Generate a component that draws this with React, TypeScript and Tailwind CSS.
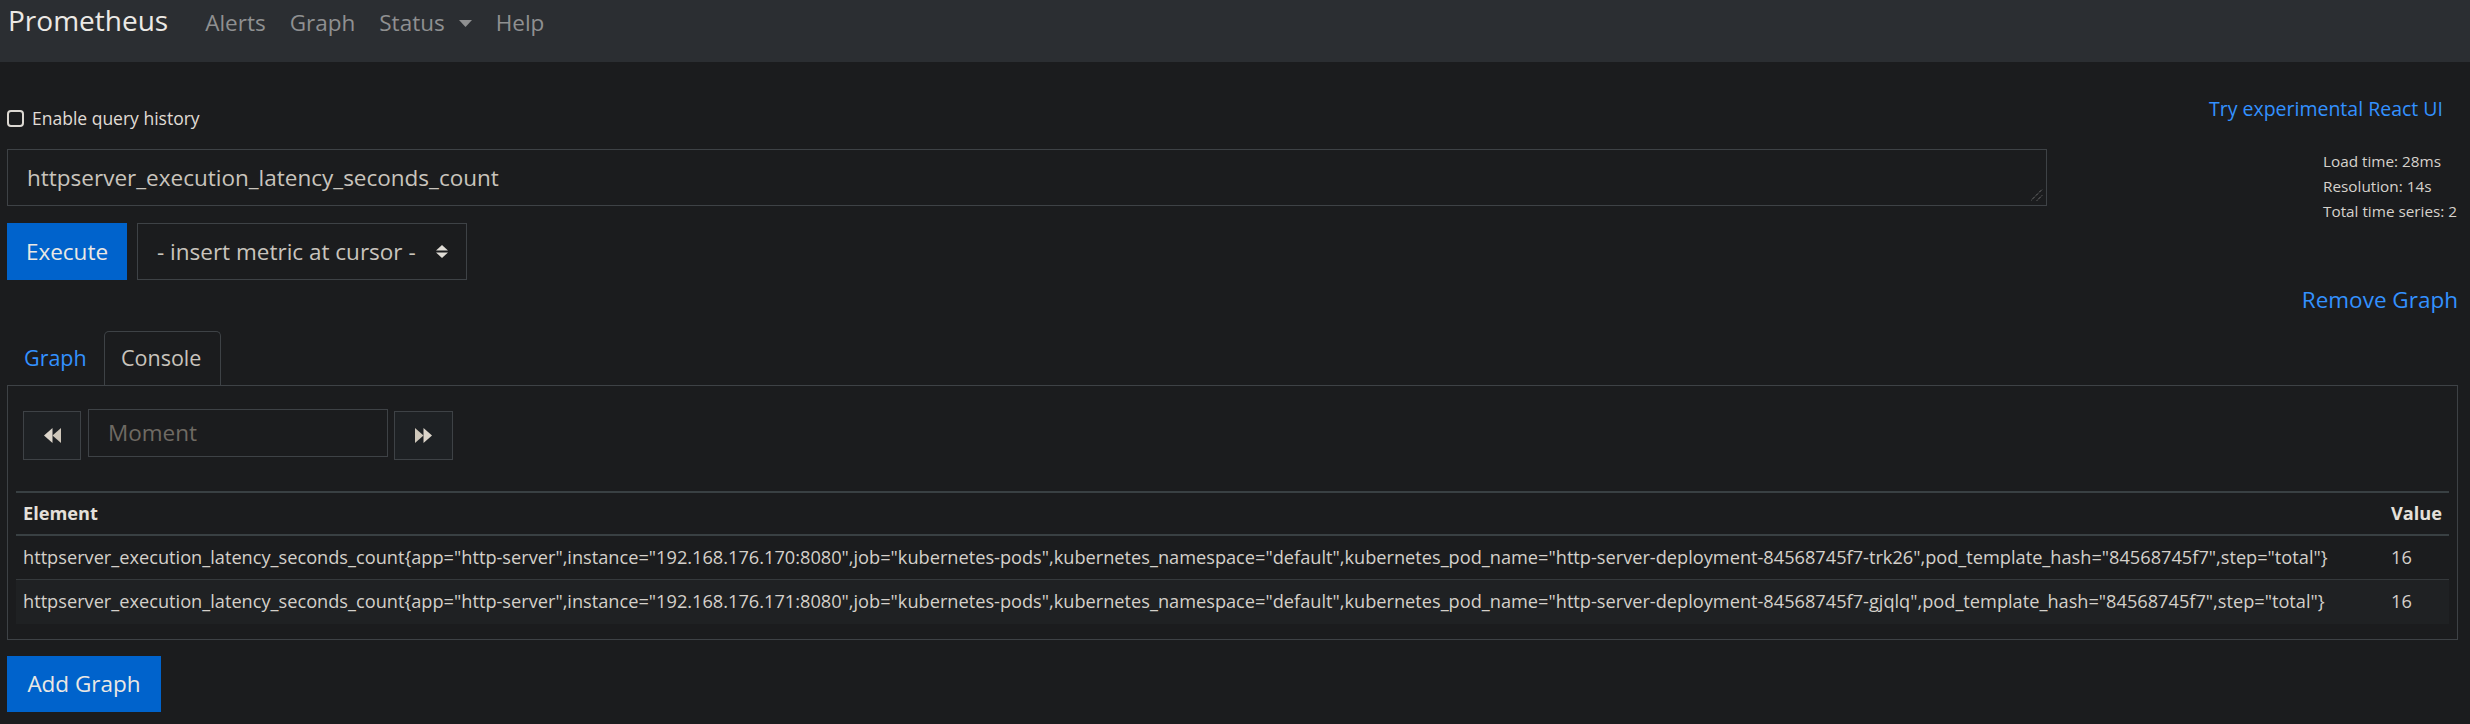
import React from "react";

// Données de la console
const rows = [
  {
    element:
      'httpserver_execution_latency_seconds_count{app="http-server",instance="192.168.176.170:8080",job="kubernetes-pods",kubernetes_namespace="default",kubernetes_pod_name="http-server-deployment-84568745f7-trk26",pod_template_hash="84568745f7",step="total"}',
    value: "16",
  },
  {
    element:
      'httpserver_execution_latency_seconds_count{app="http-server",instance="192.168.176.171:8080",job="kubernetes-pods",kubernetes_namespace="default",kubernetes_pod_name="http-server-deployment-84568745f7-gjqlq",pod_template_hash="84568745f7",step="total"}',
    value: "16",
  },
];

const Caret = () => (
  <svg width="13" height="7" viewBox="0 0 13 7" className="ml-[14px] self-center">
    <polygon points="0,0 13,0 6.5,7" fill="#8f9091" />
  </svg>
);

const SelectArrows = () => (
  <svg width="12" height="13" viewBox="0 0 12 13">
    <polygon points="6,0 12,5.5 0,5.5" fill="#e0dcd6" />
    <polygon points="0,7.5 12,7.5 6,13" fill="#e0dcd6" />
  </svg>
);

const DoubleArrow = ({ dir }: { dir: "left" | "right" }) => (
  <svg
    width="17"
    height="15"
    viewBox="0 0 17 15"
    className={dir === "right" ? "scale-x-[-1]" : ""}
  >
    <polygon points="8.5,0 0,7.5 8.5,15" fill="#ddd6cb" />
    <polygon points="17,0 8.5,7.5 17,15" fill="#cfc7ba" />
  </svg>
);

export default function App() {
  return (
    <div className="min-h-[724px] bg-[#1b1c1e] font-['Open_Sans','Noto_Sans',sans-serif] text-[#d6d2cc]">
      {/* Barre de navigation */}
      <nav className="flex h-[62px] items-baseline bg-[#2b2e32] pl-[8px] pt-[5px]">
        <span className="mr-[25px] text-[28px] leading-[30px] text-[#ece9e5]">Prometheus</span>
        <div className="flex items-baseline text-[22.5px] leading-[30px] text-[#8f9091]">
          <span className="px-[12px]">Alerts</span>
          <span className="px-[12px]">Graph</span>
          <span className="flex items-baseline px-[12px]">
            Status
            <Caret />
          </span>
          <span className="px-[12px]">Help</span>
        </div>
      </nav>

      <div className="pl-[7px] pr-[12px]">
        {/* Haut : requête + infos */}
        <div className="flex">
          <div className="flex-1">
            <label className="mt-[42px] flex h-[28px] items-center gap-[8px] text-[17.5px] text-[#e0dcd6]">
              <span className="h-[17px] w-[17px] rounded-[4px] border-[2.5px] border-[#dcd8d2]" />
              Enable query history
            </label>
            <div className="relative mt-[17px] flex h-[57px] items-center border border-[#3e4246] bg-[#1b1c1e] pl-[19px] text-[22.5px] leading-[36px] text-[#c9c4bd]">
              httpserver_execution_latency_seconds_count
              <svg width="12" height="12" viewBox="0 0 12 12" className="absolute bottom-[4px] right-[3px]">
                <line x1="0" y1="11.5" x2="11.5" y2="0" stroke="#9a9a9a" strokeDasharray="1 1" />
                <line x1="6" y1="11.5" x2="11.5" y2="6" stroke="#9a9a9a" strokeDasharray="1 1" />
              </svg>
            </div>
            <div className="mt-[17px] flex gap-[10px]">
              <button className="h-[57px] w-[120px] bg-[#0063cc] text-[22.5px] text-[#ebe8e4]">Execute</button>
              <div className="flex h-[57px] w-[330px] items-center border border-[#3e4246] pl-[19px] text-[22.5px] text-[#c9c4bd]">
                - insert metric at cursor -
                <span className="ml-auto mr-[18px]">
                  <SelectArrows />
                </span>
              </div>
            </div>
          </div>

          <div className="w-[411px]">
            <div className="mt-[31px] pr-[15px] text-right text-[19.5px] leading-[31px] text-[#3391ff]">
              Try experimental React UI
            </div>
            <div className="mt-[25px] whitespace-nowrap pl-[276px] text-[15.3px] leading-[25px] text-[#d6d2cc]">
              <div>Load time: 28ms</div>
              <div>Resolution: 14s</div>
              <div>Total time series: 2</div>
            </div>
          </div>
        </div>

        <div className="mt-[2px] text-right text-[22.5px] leading-[36px] text-[#3391ff]">Remove Graph</div>

        {/* Onglets */}
        <div className="mt-[13px] flex text-[21.5px] leading-[36px]">
          <div className="w-[97px] border border-transparent py-[8px] pl-[16px] text-[#3391ff]">Graph</div>
          <div className="w-[117px] rounded-t-[5px] border border-b-0 border-[#3e4246] py-[8px] pl-[16px] text-[#c9c4bd]">
            Console
          </div>
        </div>

        {/* Contenu de la console */}
        <div className="border border-[#3e4246] px-[8px] pb-[15px] pt-[23px]">
          <div className="flex items-start pl-[7px]">
            <div className="mt-[2px] flex h-[49px] w-[58px] items-center justify-center border border-[#3e4246] bg-[#1e2124]">
              <DoubleArrow dir="left" />
            </div>
            <div className="ml-[7px] flex h-[48px] w-[300px] items-center border border-[#3e4246] pl-[19px] text-[22.5px] text-[#6f6a63]">
              Moment
            </div>
            <div className="ml-[6px] mt-[2px] flex h-[49px] w-[59px] items-center justify-center border border-[#3e4246] bg-[#1e2124]">
              <DoubleArrow dir="right" />
            </div>
          </div>

          <div className="mt-[31px] border-t-2 border-[#394043] text-[18.2px]">
            <div className="grid h-[43px] grid-cols-[1fr_65px] items-center border-b-2 border-[#394043] font-bold text-[#e4e0da]">
              <div className="pl-[7px]">Element</div>
              <div className="pl-[7px]">Value</div>
            </div>
            {rows.map((r, i) => (
              <div
                key={i}
                className={
                  i === 0
                    ? "grid h-[44px] grid-cols-[1fr_65px] items-center border-b border-[#35393c]"
                    : "grid h-[44px] grid-cols-[1fr_65px] items-center bg-[#1f2123]"
                }
              >
                <div className="whitespace-nowrap pl-[7px] text-[#d4d0ca]">{r.element}</div>
                <div className="pl-[7px] text-[#d4d0ca]">{r.value}</div>
              </div>
            ))}
          </div>
        </div>

        <button className="mt-[16px] h-[56px] w-[154px] bg-[#0063cc] text-[22.5px] text-[#ebe8e4]">Add Graph</button>
      </div>
    </div>
  );
}
